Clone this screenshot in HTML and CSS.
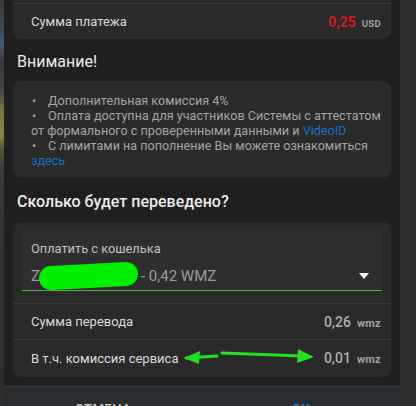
FILE: index.html
```html
<!DOCTYPE html>
<html lang="ru">
<head>
<meta charset="utf-8">
<link rel="stylesheet" href="styles.css">
</head>
<body>
<div class="screen">
  <div class="backdrop-left"></div>
  <div class="dialog">
    <div class="content">
      <div class="card card-top">
        <div class="row-tail"></div>
        <div class="row">
          <span class="row-label">Сумма платежа</span>
          <span class="amount"><span class="num red">0,25</span><span class="cur">USD</span></span>
        </div>
      </div>

      <h2 class="heading">Внимание!</h2>
      <div class="card notes">
        <ul class="note-list">
          <li><span class="bullet">•</span>Дополнительная комиссия 4%</li>
          <li><span class="bullet">•</span>Оплата доступна для участников Системы с аттестатом от формального с проверенными данными и <a class="link" href="#">VideoID</a></li>
          <li><span class="bullet">•</span>С лимитами на пополнение Вы можете ознакомиться <a class="link" href="#">здесь</a></li>
        </ul>
      </div>

      <h2 class="heading heading-2">Сколько будет переведено?</h2>
      <div class="card transfer">
        <div class="select-wrap">
          <div class="select">
            <div class="select-label">Оплатить с кошелька</div>
            <div class="select-value">
              <span>Z</span><span class="hidden-id"></span><span>- 0,42 WMZ</span>
              <svg class="caret" width="10" height="6" viewBox="0 0 10 6"><path d="M0 0h10L5 6z" fill="#f2f2f2"/></svg>
            </div>
            <svg class="scribble" width="110" height="30" viewBox="0 0 110 30"><path d="M13 16 L 88 12" stroke="#00f000" stroke-width="24" stroke-linecap="round" fill="none"/></svg>
          </div>
        </div>
        <div class="row row-div">
          <span class="row-label">Сумма перевода</span>
          <span class="amount"><span class="num">0,26</span><span class="cur low">wmz</span></span>
        </div>
        <div class="row row-div">
          <span class="row-label">В т.ч. комиссия сервиса</span>
          <span class="amount"><span class="num">0,01</span><span class="cur low">wmz</span></span>
          <svg class="arrows" width="134" height="18" viewBox="0 0 134 18">
            <path d="M2 11 L 33 9" stroke="#22e022" stroke-width="3" stroke-linecap="round" fill="none"/>
            <path d="M0 11 L 16 4 L 15 17 Z" fill="#22e022"/>
            <path d="M38 6 L 118 9" stroke="#22e022" stroke-width="3" stroke-linecap="round" fill="none"/>
            <path d="M130 10 L 114 2 L 113 16 Z" fill="#22e022"/>
          </svg>
        </div>
      </div>
    </div>
    <div class="footer">
      <span class="btn">Отмена</span>
      <span class="btn btn-ok">ОК</span>
    </div>
  </div>
  <div class="backdrop-right"></div>
</div>
</body>
</html>
```

FILE: styles.css
```css
* { box-sizing: border-box; }
html, body {
  margin: 0;
  padding: 0;
  width: 416px;
  height: 406px;
  overflow: hidden;
  background: #2c2c2c;
  font-family: Roboto, "Noto Sans", "Liberation Sans", sans-serif;
}
.screen {
  display: flex;
  width: 416px;
  height: 406px;
}
.backdrop-left {
  width: 4px;
  flex: none;
  background: linear-gradient(180deg, #3a3a3a 0px, #3d4a55 30px, #4a5a78 45px, #3a3a3a 60px, #444 90px, #7a7440 110px, #8a8440 135px, #55553a 150px, #3a3a3a 170px, #333 240px, #2e2e2e 406px);
}
.backdrop-right {
  width: 16px;
  flex: none;
  background: #2d2d2d;
}
.dialog {
  width: 396px;
  flex: none;
  display: flex;
  flex-direction: column;
  background: #1f1f1f;
}
.content {
  padding: 0 9px;
  height: 386px;
  flex: none;
}
.card {
  background: #2a2a2a;
  border-radius: 8px;
}
.card-top {
  border-radius: 0 0 8px 8px;
}
.row-tail {
  height: 4px;
  border-bottom: 1px solid #3a3a3a;
}
.row {
  position: relative;
  height: 35px;
  display: flex;
  align-items: center;
  justify-content: space-between;
  padding: 0 10px 0 18px;
}
.row-label {
  font-size: 13px;
  color: #dcdcdc;
}
.amount {
  display: flex;
  align-items: baseline;
  gap: 6px;
}
.num {
  font-size: 14px;
  font-weight: 500;
  color: #b0b0b0;
}
.num.red { color: #d41c1c; font-weight: 700; }
.cur {
  font-size: 9.5px;
  font-weight: 700;
  color: #a4a4a4;
  letter-spacing: 0.3px;
}
.cur.low { font-size: 11px; }
.heading {
  margin: 12px 0 8px 4px;
  font-size: 16px;
  line-height: 22px;
  font-weight: 400;
  color: #ececec;
}
.heading-2 { margin: 13px 0 9px 4px; font-weight: 500; }
.notes {
  height: 97px;
  padding: 12px 4px 0 18px;
}
.note-list {
  list-style: none;
  margin: 0;
  padding: 0;
  font-size: 12.6px;
  line-height: 15px;
  color: #a6a6a6;
}
.bullet {
  display: inline-block;
  width: 17px;
  padding-left: 1px;
  color: #a0a0a0;
}
.link {
  color: #1a73c8;
  text-decoration: none;
}
.transfer {
  height: 155px;
}
.select-wrap {
  padding: 7px 9px 0;
  height: 82px;
  border-bottom: 1px solid #3a3a3a;
}
.select {
  position: relative;
  height: 62px;
  background: #2e2e2e;
  border-radius: 4px 4px 0 0;
  border-bottom: 1px solid #54b04a;
  padding: 12px 9px 0;
}
.select-label {
  font-size: 12.8px;
  line-height: 16px;
  color: #c2c2c2;
}
.select-value {
  display: flex;
  align-items: center;
  margin-top: 9px;
  font-size: 15px;
  line-height: 20px;
  color: #9e9e9e;
}
.hidden-id {
  width: 101px;
  flex: none;
}
.caret {
  margin-left: auto;
  margin-right: 4px;
}
.scribble {
  position: absolute;
  left: 16px;
  top: 33px;
}
.row-div {
  height: 36px;
  border-bottom: 1px solid #3a3a3a;
}
.row-div:last-child {
  border-bottom: none;
  height: 36px;
}
.arrows {
  position: absolute;
  left: 171px;
  top: 7px;
}
.footer {
  flex: 1;
  background: #2a2d30;
  border-top: 1px solid #3a3b3c;
  display: flex;
  padding: 14px 0 0 0;
  overflow: hidden;
}
.btn {
  flex: 1;
  text-align: center;
  font-size: 13px;
  font-weight: 500;
  text-transform: uppercase;
  color: #cfcfcf;
  letter-spacing: 0.5px;
}
.btn-ok { color: #2680d0; }
```
